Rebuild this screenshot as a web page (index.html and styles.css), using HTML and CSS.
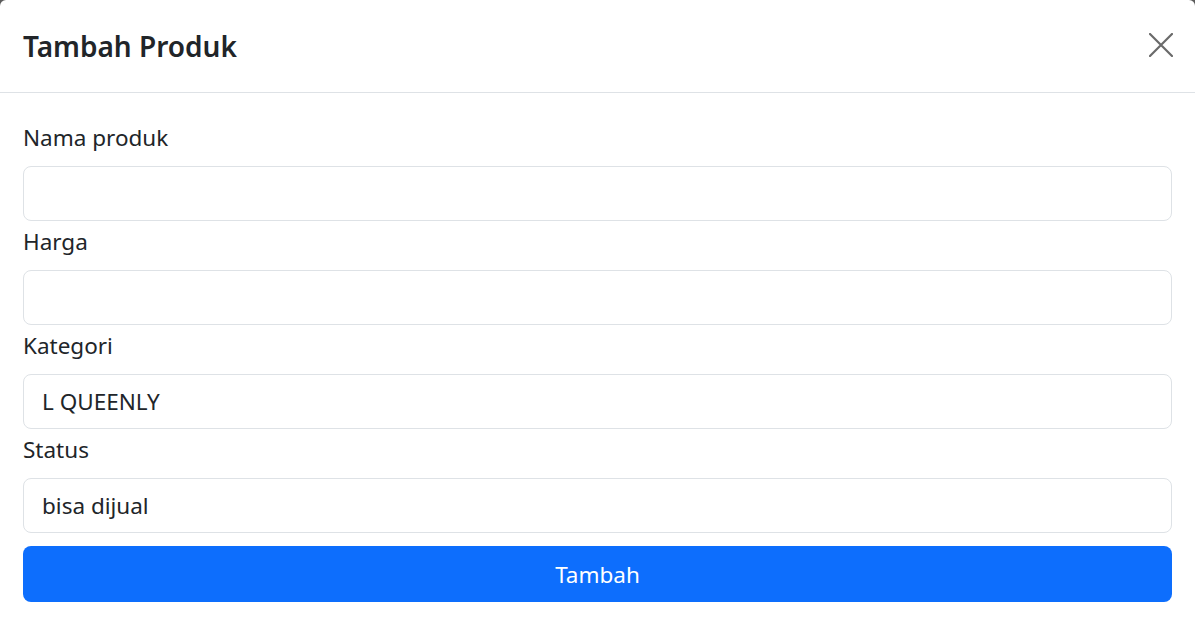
FILE: index.html
```html
<!DOCTYPE html>
<html lang="id">
<head>
<meta charset="utf-8">
<title>Tambah Produk</title>
<link rel="stylesheet" href="styles.css">
</head>
<body>
<div class="modal">
  <div class="modal-header">
    <h5 class="modal-title">Tambah Produk</h5>
    <button class="btn-close" type="button" aria-label="Close">
      <svg width="24" height="24" viewBox="0 0 24 24"><path d="M1 1L23 23M23 1L1 23" stroke="#6a6a6a" stroke-width="2.2" stroke-linecap="round"/></svg>
    </button>
  </div>
  <form class="modal-body">
    <div class="field">
      <label class="form-label">Nama produk</label>
      <input class="form-control" type="text">
    </div>
    <div class="field">
      <label class="form-label">Harga</label>
      <input class="form-control" type="text">
    </div>
    <div class="field">
      <label class="form-label">Kategori</label>
      <div class="form-control">L QUEENLY</div>
    </div>
    <div class="field">
      <label class="form-label">Status</label>
      <div class="form-control">bisa dijual</div>
    </div>
    <button class="btn-primary" type="button">Tambah</button>
  </form>
</div>
</body>
</html>
```

FILE: styles.css
```css
html {
  background: #5c5c5c;
}
body {
  margin: 0;
  font-family: "Noto Sans", "Open Sans", sans-serif;
  color: #212529;
}
.modal {
  background: #fff;
  border-radius: 6px 6px 0 0;
  height: 619px;
}
.modal-header {
  height: 92px;
  border-bottom: 1px solid #dee2e6;
  display: flex;
  align-items: center;
  justify-content: space-between;
  padding: 0 22px 0 23px;
}
.modal-title {
  margin: 0;
  font-size: 28px;
  font-weight: 600;
  line-height: 40px;
}
.btn-close {
  border: 0;
  background: none;
  padding: 0;
  width: 24px;
  height: 24px;
  margin-top: -2px;
}
.btn-close svg {
  display: block;
}
.modal-body {
  padding: 29px 23px 0;
  display: flex;
  flex-direction: column;
}
.field {
  display: flex;
  flex-direction: column;
}
.form-label {
  font-size: 22.5px;
  line-height: 33px;
  margin: 4px 0 12px;
}
.field:first-child .form-label {
  margin-top: -1px;
}
.form-control {
  box-sizing: border-box;
  height: 55px;
  border: 1px solid #dee2e6;
  border-radius: 8px;
  padding: 0 18px;
  font: inherit;
  font-size: 22.5px;
  color: #212529;
  display: flex;
  align-items: center;
}
.btn-primary {
  margin-top: 13px;
  height: 56px;
  border: 0;
  border-radius: 8px;
  background: #0d6efd;
  color: #fff;
  font: inherit;
  font-size: 22.5px;
}
```
